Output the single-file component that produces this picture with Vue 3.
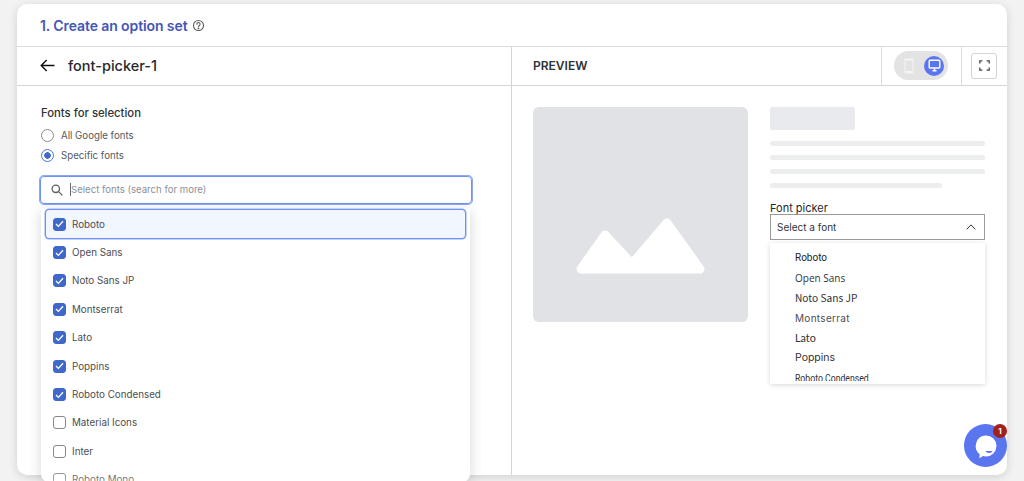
<script setup>
const fonts = [
  { name: 'Roboto', on: true, active: true },
  { name: 'Open Sans', on: true },
  { name: 'Noto Sans JP', on: true },
  { name: 'Montserrat', on: true },
  { name: 'Lato', on: true },
  { name: 'Poppins', on: true },
  { name: 'Roboto Condensed', on: true },
  { name: 'Material Icons', on: false },
  { name: 'Inter', on: false },
  { name: 'Roboto Mono', on: false }
]
const previews = [
  { name: 'Roboto', cls: 'f-roboto' },
  { name: 'Open Sans', cls: 'f-open' },
  { name: 'Noto Sans JP', cls: 'f-noto' },
  { name: 'Montserrat', cls: 'f-mont' },
  { name: 'Lato', cls: 'f-lato' },
  { name: 'Poppins', cls: 'f-pop' },
  { name: 'Roboto Condensed', cls: 'f-cond' }
]
const skeletonLines = [100, 100, 100, 80]
</script>

<template>
  <div class="page">
    <div class="card">
      <header class="title">
        <h1>1. Create an option set</h1>
        <svg class="help" width="13" height="13" viewBox="0 0 13 13" fill="none" stroke="#5c5f62" stroke-width="1.1">
          <circle cx="6.5" cy="6.5" r="5" />
          <path d="M4.9 5.200a1.600 1.600 0 1 1 2.500 1.300c-.6.4-.9.7-.9 1.200" stroke-linecap="round" />
          <circle cx="6.5" cy="9.4" r=".35" />
        </svg>
      </header>

      <div class="editor">
        <section class="left">
          <div class="bar left-bar">
            <svg width="15" height="13" viewBox="0 0 15 13" fill="none" stroke="#111" stroke-width="1.4">
              <path d="M14.500 6.500H1.200M6.700 1 1.200 6.500 6.700 12" />
            </svg>
            <h2>font-picker-1</h2>
          </div>
          <div class="form">
            <div class="legend">Fonts for selection</div>
            <label class="radio"><span class="dot"></span>All Google fonts</label>
            <label class="radio"><span class="dot dot-on"></span>Specific fonts</label>
            <div class="search">
              <svg width="12" height="12" viewBox="0 0 12 12" fill="none" stroke="#5c5f62" stroke-width="1.3">
                <circle cx="4.800" cy="4.800" r="3.700" />
                <path d="m7.600 7.600 3.800 3.800" />
              </svg>
              <span class="caret"></span>
              <span class="placeholder">Select fonts (search for more)</span>
            </div>
            <div class="dropdown">
              <div v-for="f in fonts" :key="f.name" class="row" :class="{ active: f.active }">
                <span class="box" :class="{ checked: f.on }">
                  <svg v-if="f.on" width="9" height="8" viewBox="0 0 9 8" fill="none" stroke="#fff" stroke-width="1.3">
                    <path d="m1 4 2.400 2.400L8 1.200" />
                  </svg>
                </span>
                {{ f.name }}
              </div>
              <div class="fade"></div>
            </div>
          </div>
        </section>

        <section class="right">
          <div class="bar right-bar">
            <div class="preview-title">PREVIEW</div>
            <div class="device-cell">
              <div class="toggle">
                <svg width="10" height="16" viewBox="0 0 10 16">
                  <rect x="0.5" y="0.5" width="9" height="15" rx="1" fill="#f4f4f5" />
                  <rect x="1.500" y="2.500" width="7" height="10.500" fill="#e3e3e4" />
                </svg>
                <span class="device-on">
                  <svg width="13" height="13" viewBox="0 0 13 13" fill="none" stroke="#fff" stroke-width="1.4">
                    <rect x="1.200" y="1.200" width="10.600" height="7.800" rx="1" />
                    <path d="M6.500 9.500v2M4.500 11.700h4" />
                  </svg>
                </span>
              </div>
            </div>
            <div class="full-cell">
              <button class="full" type="button" aria-label="Fullscreen">
                <svg width="11" height="11" viewBox="0 0 11 11" fill="none" stroke="#44474a" stroke-width="1.3">
                  <path d="M.8 3.400V.8h2.600M7.600.8h2.600v2.600M10.200 7.600v2.600H7.600M3.400 10.200H.8V7.600" />
                </svg>
              </button>
            </div>
          </div>

          <div class="stage">
            <div class="image">
              <svg width="215" height="215" viewBox="0 0 215 215">
                <path d="M48 162 72 128 99 157 134 116 167 162Z" fill="#fff" stroke="#fff" stroke-width="9" stroke-linejoin="round" />
              </svg>
            </div>
            <div class="info">
              <div class="sk-head"></div>
              <div v-for="(w, i) in skeletonLines" :key="i" class="sk-line" :style="{ width: w + '%' }"></div>
              <div class="picker-label">Font picker</div>
              <div class="select">
                <span>Select a font</span>
                <svg width="10" height="6" viewBox="0 0 10 6" fill="none" stroke="#333" stroke-width="1">
                  <path d="m.7 5.300 4.300-4.400 4.300 4.400" />
                </svg>
              </div>
              <div class="menu">
                <div class="menu-list">
                  <div v-for="p in previews" :key="p.name" class="menu-item" :class="p.cls">{{ p.name }}</div>
                </div>
              </div>
            </div>
          </div>
        </section>
      </div>
    </div>

    <div class="chat">
      <svg width="26" height="26" viewBox="0 0 26 26">
        <path d="M13 2.500a10.500 10.500 0 0 1 0 21c-1 0-2-.1-2.900-.4L6.300 25.300l.4-4.100A10.500 10.500 0 0 1 13 2.500Z" fill="#fff" />
        <path d="M12.500 18h7c-.6 2.600-6.400 2.600-7 0Z" fill="#5a75f0" />
      </svg>
      <span class="badge">1</span>
    </div>
  </div>
</template>

<style>
html, body { margin: 0; overflow: hidden; }
</style>

<style scoped>
* { box-sizing: border-box; }
.page {
  position: relative;
  width: 1024px;
  height: 481px;
  padding: 4px 17px 6px;
  background: #f2f2f2;
  overflow: hidden;
  font-family: Inter, "Liberation Sans", sans-serif;
  color: #303236;
}
.card {
  height: 100%;
  display: flex;
  flex-direction: column;
  background: #fff;
  border-radius: 10px;
  box-shadow: 0 2px 8px rgba(0, 0, 0, .14);
}
.title {
  height: 42px;
  flex: none;
  display: flex;
  align-items: center;
  gap: 5px;
  padding-left: 23px;
}
h1 {
  margin: 0;
  font-size: 14px;
  font-weight: 600;
  letter-spacing: -.1px;
  color: #4456b8;
}
.editor {
  flex: 1;
  min-height: 0;
  display: grid;
  grid-template-columns: 495px 1fr;
  border-top: 1.5px solid #dcdcdc;
}
.left { border-right: 1px solid #d4d4d4; min-width: 0; }
.bar {
  height: 38.5px;
  display: flex;
  align-items: center;
  border-bottom: 1px solid #d4d4d4;
}
.left-bar { padding-left: 23px; gap: 13px; }
h2 {
  margin: 0;
  font-size: 14.500px;
  font-weight: 500;
  color: #26282b;
}
.form { position: relative; padding: 20px 0 0 24px; }
.legend {
  font-size: 11.300px;
  font-weight: 500;
  line-height: 14px;
  color: #303236;
  margin-bottom: 6px;
}
.radio {
  display: flex;
  align-items: center;
  gap: 7px;
  height: 20px;
  font-size: 9.700px;
  color: #55585c;
}
.dot {
  width: 13px;
  height: 13px;
  border: 1px solid #8a8d91;
  border-radius: 50%;
}
.dot-on {
  border-color: #4a76d8;
  background: radial-gradient(circle, #3f6ad0 0 3px, #fff 3.5px);
}
.search {
  display: flex;
  align-items: center;
  width: 432px;
  height: 28px;
  margin: 10px 0 0 -1px;
  padding-left: 10px;
  border: 1px solid #6d93f0;
  border-radius: 4px;
  box-shadow: 0 0 0 1px #8aa8f2;
}
.caret {
  width: 1px;
  height: 13px;
  margin-left: 7px;
  background: #66696d;
}
.placeholder { font-size: 9.600px; color: #8d9094; }
.dropdown {
  position: absolute;
  left: 24px;
  top: 122px;
  width: 429px;
  height: 274px;
  overflow: hidden;
  padding: 1.500px 4px 0;
  background: #fff;
  border-radius: 0 0 8px 8px;
  box-shadow: 0 3px 14px rgba(0, 0, 0, .16);
}
.row {
  display: flex;
  align-items: center;
  gap: 6px;
  height: 28.400px;
  padding-left: 8px;
  font-size: 9.800px;
  color: #4b4e52;
}
.row.active {
  height: 30px;
  margin-bottom: -.6px;
  background: #f2f6fe;
  border: 1px solid #6d93f0;
  border-radius: 4px;
  box-shadow: 0 0 0 .5px #8aa8f2;
  padding-left: 7px;
}
.box {
  width: 13px;
  height: 13px;
  display: flex;
  align-items: center;
  justify-content: center;
  border: 1px solid #84878b;
  border-radius: 3px;
}
.box.checked { background: #3e69cb; border-color: #3e69cb; }
.fade {
  position: absolute;
  left: 0;
  right: 0;
  bottom: 0;
  height: 12px;
  background: linear-gradient(rgba(255, 255, 255, 0), rgba(255, 255, 255, .35));
}
.right { min-width: 0; }
.right-bar { align-items: stretch; }
.preview-title {
  flex: 1;
  display: flex;
  align-items: center;
  padding-left: 21px;
  font-size: 12px;
  font-weight: 600;
  color: #303236;
}
.device-cell {
  width: 81px;
  display: flex;
  align-items: center;
  justify-content: center;
  border-left: 1px solid #dcdcdc;
  border-right: 1px solid #dcdcdc;
}
.toggle {
  width: 54px;
  height: 29px;
  margin-left: -1px;
  display: flex;
  align-items: center;
  justify-content: space-between;
  padding: 0 4px 0 10px;
  border-radius: 15px;
  background: #e3e3e4;
}
.device-on {
  width: 20px;
  height: 20px;
  display: flex;
  align-items: center;
  justify-content: center;
  border-radius: 50%;
  background: #5a75f0;
}
.full-cell {
  width: 45px;
  display: flex;
  align-items: center;
  padding-left: 9px;
}
.full {
  width: 26px;
  height: 26px;
  padding: 0;
  display: flex;
  align-items: center;
  justify-content: center;
  background: #fff;
  border: 1px solid #d3d3d3;
  border-radius: 3px;
}
.stage {
  display: flex;
  gap: 22px;
  padding: 21px 0 0 21px;
}
.image {
  width: 215px;
  height: 215px;
  flex: none;
  background: #e1e2e6;
  border-radius: 6px;
}
.image svg { display: block; }
.info { position: relative; width: 215px; flex: none; }
.sk-head {
  width: 85px;
  height: 23px;
  margin-bottom: 11px;
  background: #e9eaee;
  border-radius: 2px;
}
.sk-line {
  height: 5.500px;
  margin-bottom: 8.600px;
  background: #eceded;
  border-radius: 3px;
}
.picker-label {
  margin-top: 14px;
  font-size: 11px;
  line-height: 13px;
  color: #26282b;
}
.select {
  height: 26px;
  margin-top: -1px;
  display: flex;
  align-items: center;
  justify-content: space-between;
  padding: 0 8px 0 6px;
  border: 1px solid #9a9a9a;
  font-size: 10px;
  color: #33363a;
}
.menu {
  position: absolute;
  left: 0;
  top: 136px;
  width: 215px;
  height: 141px;
  padding: 5px 0 3px 25px;
  background: #fff;
  box-shadow: 0 1px 5px rgba(0, 0, 0, .16);
}
.menu-list { height: 133px; overflow: hidden; }
.menu-item {
  height: 20px;
  line-height: 20px;
  color: #303236;
  white-space: nowrap;
}
.f-roboto { font-family: Roboto, sans-serif; font-size: 10px; color: #1c1c1c; }
.f-open { font-family: "Open Sans", sans-serif; font-size: 10px; }
.f-noto { font-family: "Noto Sans CJK JP", sans-serif; font-size: 10.200px; }
.f-mont { font-family: Inter, sans-serif; font-size: 10px; letter-spacing: .3px; color: #4b4e52; }
.f-lato { font-family: Lato, sans-serif; font-size: 10.800px; }
.f-pop { font-family: Inter, sans-serif; font-size: 10.500px; }
.f-cond { font-family: Roboto, sans-serif; font-size: 11px; line-height: 21px; transform: scaleX(.79); transform-origin: left center; }
.chat {
  position: absolute;
  left: 964px;
  top: 424px;
  width: 43px;
  height: 43px;
  display: flex;
  align-items: center;
  justify-content: center;
  background: #5a75f0;
  border-radius: 50%;
}
.badge {
  position: absolute;
  top: 0;
  right: 0;
  width: 14px;
  height: 14px;
  display: flex;
  align-items: center;
  justify-content: center;
  border-radius: 50%;
  background: #a3211c;
  color: #fff;
  font-size: 8px;
  font-weight: 700;
}
</style>
